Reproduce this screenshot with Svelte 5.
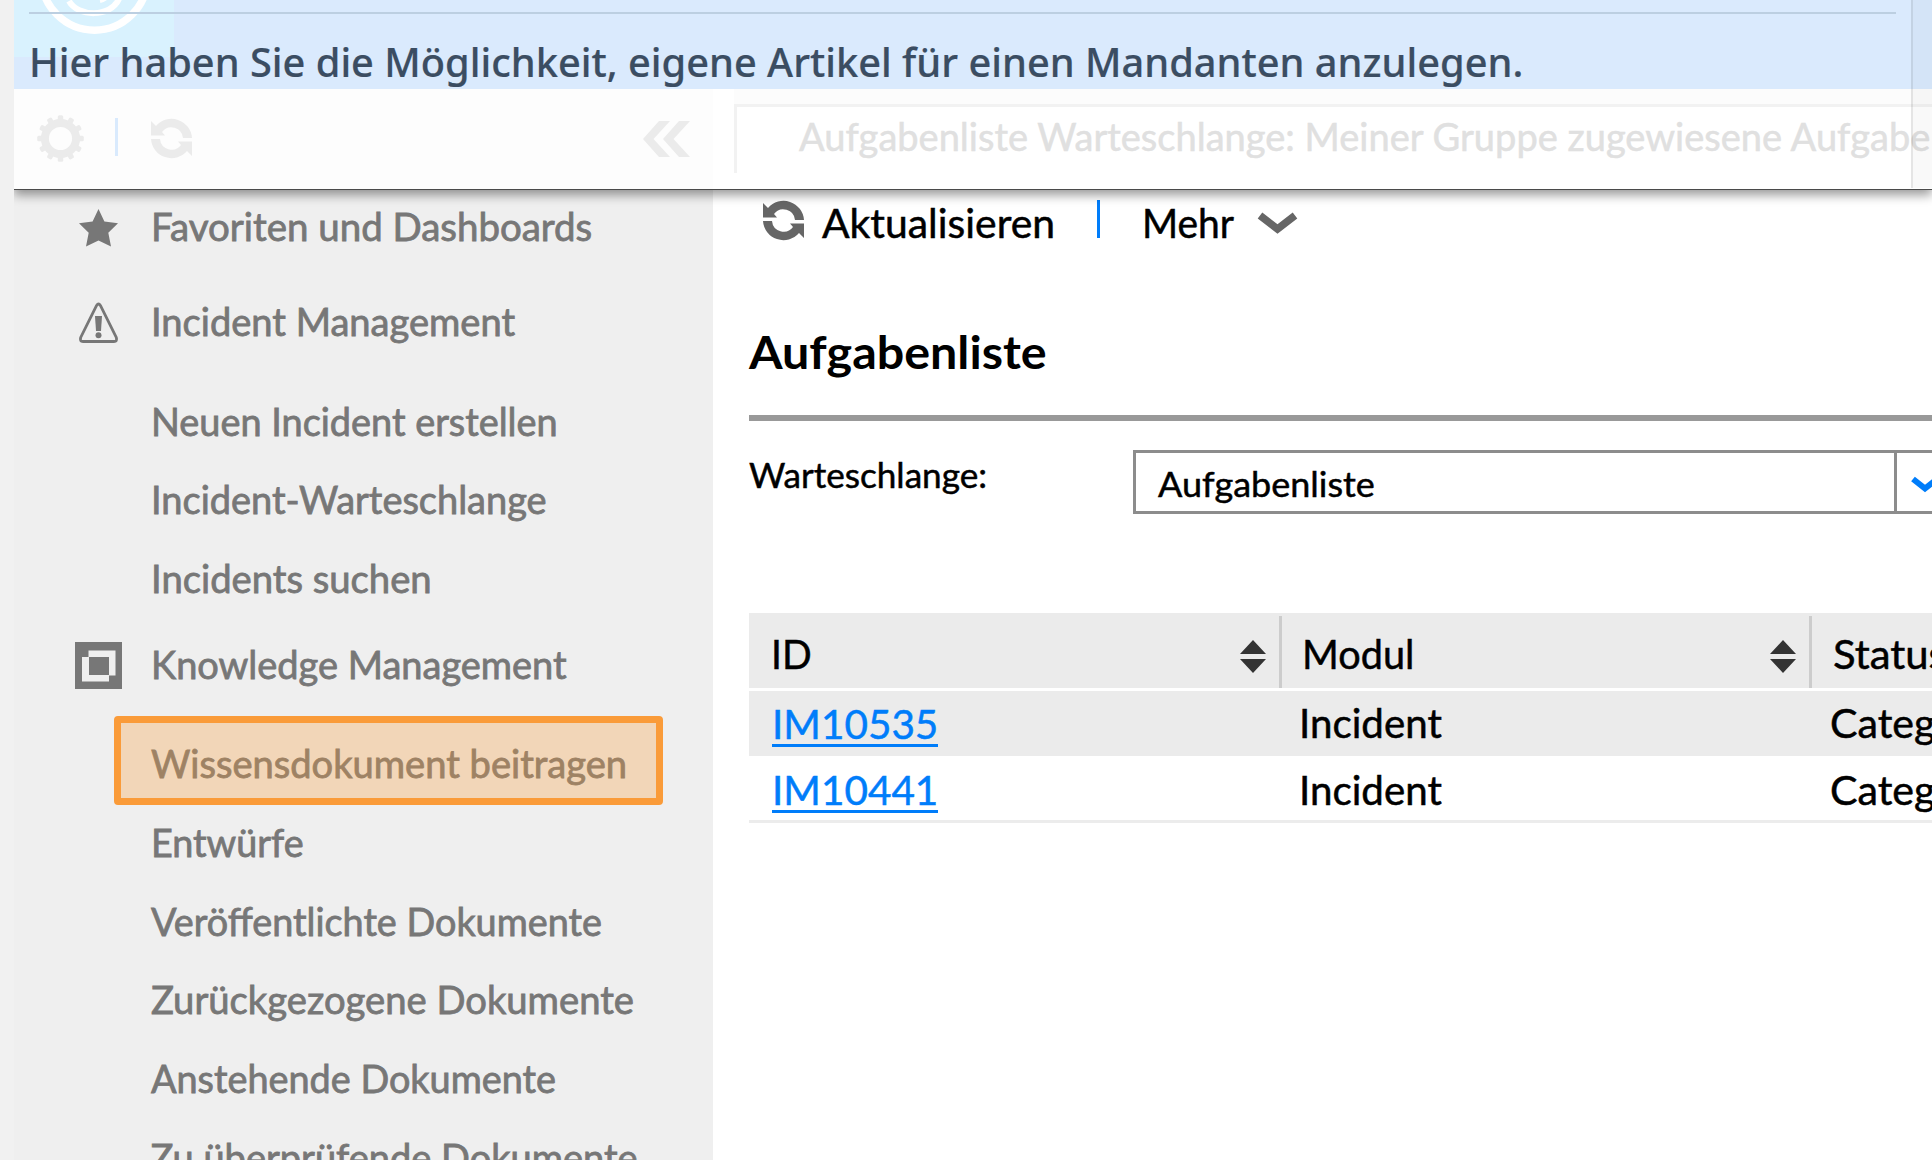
<script>
  const groups = [
    { icon: 'star', label: 'Favoriten und Dashboards', width: 441, size: 'first', items: [] },
    {
      icon: 'warning', label: 'Incident Management', width: 364.5, size: 'tall',
      items: [
        { label: 'Neuen Incident erstellen', width: 406.5 },
        { label: 'Incident-Warteschlange', width: 395.5 },
        { label: 'Incidents suchen', width: 280.5 }
      ]
    },
    {
      icon: 'knowledge', label: 'Knowledge Management', width: 415.5, size: 'medium',
      items: [
        { label: 'Wissensdokument beitragen', width: 476, active: true },
        { label: 'Entwürfe', width: 153 },
        { label: 'Veröffentlichte Dokumente', width: 450.5 },
        { label: 'Zurückgezogene Dokumente', width: 482.5 },
        { label: 'Anstehende Dokumente', width: 405 },
        { label: 'Zu überprüfende Dokumente', width: 487 }
      ]
    }
  ];

  const columns = [
    { label: 'ID', width: 41, sortable: true },
    { label: 'Modul', width: 112, sortable: true },
    { label: 'Status', width: 114, sortable: false }
  ];

  const rows = [
    { id: 'IM10535', module: 'Incident', status: 'Categ' },
    { id: 'IM10441', module: 'Incident', status: 'Categ' }
  ];

  const teeth = Array.from({ length: 12 }, (_, i) => i * 30);

  // Condenses or widens a line of text to the given width.
  function fit(node, width) {
    node.style.transform = `scaleX(${width / node.offsetWidth})`;
  }
</script>

{#snippet line(text, width)}
  <span class="line" style:width="{width}px"><span class="glyphs" use:fit={width}>{text}</span></span>
{/snippet}

{#snippet refresh()}
  <svg class="refresh" viewBox="0 0 41 41">
    <path d="M0 3 L5 8 A20.5 20.5 0 0 1 41 20 H32 A11.7 11.7 0 0 0 11 14 L14 17.5 H0Z" />
    <path d="M41 38 L36 33 A20.5 20.5 0 0 1 0 21 H9 A11.7 11.7 0 0 0 30 27 L27 23.5 H41Z" />
  </svg>
{/snippet}

<div class="app">
  <div class="edge"></div>
  <div class="window">
    <header>
      <div class="banner">
        <svg class="logo" viewBox="0 0 160 57">
          <circle cx="80.5" cy="-22.8" r="53" stroke-width="7.5" />
          <path d="M55 1 C64 17 96 18 105 -1" stroke-width="6" />
          <path d="M86 1 Q91 0 97 -6" stroke-width="4" />
        </svg>
        <div class="rule"></div>
        <p>{@render line('Hier haben Sie die Möglichkeit, eigene Artikel für einen Mandanten anzulegen.', 1494)}</p>
      </div>
      <div class="tabs">
        <div class="tools">
          <svg class="gear" viewBox="-23.5 -23.5 47 47">
            <circle r="15.6" fill="none" stroke="#ebebeb" stroke-width="8" />
            {#each teeth as angle}
              <rect x="-2.7" y="-23.3" width="5.4" height="7" rx="1.5" transform="rotate({angle})" />
            {/each}
          </svg>
          <span class="divider"></span>
          {@render refresh()}
          <svg class="collapse" viewBox="0 0 47 36">
            <path d="M16 0H27L10.500 18L27 36H16L0 18Z M36 0H47L30.500 18L47 36H36L20 18Z" />
          </svg>
        </div>
        <div class="tab">
          {@render line('Aufgabenliste Warteschlange: Meiner Gruppe zugewiesene Aufgabe', 1131)}
        </div>
      </div>
      <div class="panel-edge"></div>
    </header>

    <div class="body">
      <nav>
        {#each groups as group}
          <div class="group {group.size}">
            <span class="icon">
              {#if group.icon === 'star'}
                <svg width="39" height="38" viewBox="0 0 39 38">
                  <path d="M19.500 0L25.400 12.500L39 14.200L29.300 23.800L32 37.500L19.500 31.500L7 37.500L9.700 23.800L0 14.200L13.600 12.500Z" />
                </svg>
              {:else if group.icon === 'warning'}
                <svg width="39" height="40" viewBox="0 0 39 40">
                  <path d="M17.600 2.500Q19.500 -.5 21.400 2.500L37.300 34.500Q38.500 38.500 35 38.500H4Q.5 38.500 1.700 34.500Z" fill="none" stroke="#777" stroke-width="2.800" />
                  <path d="M16 13H23L22 28H17Z" />
                  <circle cx="19.500" cy="32.300" r="3" />
                </svg>
              {:else}
                <svg width="47" height="47" viewBox="0 0 47 47">
                  <path d="M0 0H47V47H0Z" />
                  <path d="M13.500 8.500H40.500V33.500H34V39.500H7V15H13.500Z" fill="#efefef" />
                  <path d="M14 15H34V33H14Z" />
                </svg>
              {/if}
            </span>
            {@render line(group.label, group.width)}
          </div>
          {#if group.items.length}
            <ul class={group.size}>
              {#each group.items as item}
                <li class:active={item.active}>{@render line(item.label, item.width)}</li>
              {/each}
            </ul>
          {/if}
        {/each}
      </nav>

      <main>
        <div class="toolbar">
          {@render refresh()}
          {@render line('Aktualisieren', 233)}
          <span class="divider"></span>
          {@render line('Mehr', 92.5)}
          <svg class="more" viewBox="0 0 39 21">
            <path d="M2 3.500L19.500 17L37 3.500" fill="none" stroke="#666" stroke-width="7.500" />
          </svg>
        </div>

        <h1>{@render line('Aufgabenliste', 298)}</h1>

        <div class="filter">
          <span class="name">{@render line('Warteschlange:', 238)}</span>
          <div class="select">
            <span class="value">{@render line('Aufgabenliste', 217)}</span>
            <span class="arrow">
              <svg viewBox="0 0 28 16"><path d="M2 3L14 12.500L26 3" fill="none" stroke="#007dfa" stroke-width="6" /></svg>
            </span>
          </div>
        </div>

        <div class="table">
          <div class="row head">
            {#each columns as column}
              <div class="cell">
                {@render line(column.label, column.width)}
                {#if column.sortable}
                  <svg class="sort" viewBox="0 0 26 33"><path d="M13 0L26 14H0Z M0 19H26L13 33Z" /></svg>
                {/if}
              </div>
            {/each}
          </div>
          {#each rows as row}
            <div class="row">
              <div class="cell"><a href="#{row.id}">{@render line(row.id, 166)}</a></div>
              <div class="cell">{@render line(row.module, 143)}</div>
              <div class="cell">{@render line(row.status, 106)}</div>
            </div>
          {/each}
        </div>
      </main>
    </div>
  </div>
</div>

<style>
  :global(body) { margin: 0; background: #fff; }
  .app {
    display: flex;
    width: 1932px;
    height: 1160px;
    overflow: hidden;
    font-family: Lato, "Liberation Sans", sans-serif;
    color: #000;
  }
  svg { display: block; flex: none; overflow: visible; }
  .line { display: block; flex: none; white-space: nowrap; }
  .glyphs { display: inline-block; transform-origin: left center; }
  .edge { flex: none; width: 14px; background: #f1f1f1; position: relative; z-index: 3; }
  .window { flex: none; width: 1918px; display: flex; flex-direction: column; }

  header {
    position: relative;
    z-index: 2;
    box-sizing: border-box;
    flex: none;
    height: 190px;
    border-bottom: 1px solid #4a4a4a;
    background: #fff;
    box-shadow: 0 5px 10px rgba(0, 0, 0, .4);
  }
  .banner { position: relative; height: 89px; background: #daeafd; overflow: hidden; }
  .logo {
    position: absolute;
    left: 0;
    top: 0;
    width: 160px;
    height: 57px;
    background: #d9f2fe;
    fill: none;
    stroke: #fff;
    overflow: hidden;
  }
  .rule { position: relative; width: 1867px; height: 2px; margin: 12px 0 0 15px; background: #bccfe1; }
  p {
    position: relative;
    margin: 17px 0 0 14.500px;
    font: 500 39px/62px "Noto Sans", sans-serif;
    color: #3b4d62;
    -webkit-text-stroke: .2px #3b4d62;
  }
  .tabs { display: flex; height: 100px; }
  .tools {
    box-sizing: border-box;
    width: 699px;
    padding: 0 23px 1px 23px;
    display: flex;
    align-items: center;
    background: #fdfdfd;
    fill: #ebebeb;
  }
  .gear { width: 47px; height: 47px; }
  .tools .divider { width: 3px; height: 38px; margin: 0 33px 3px 31px; background: #d9eafd; }
  .refresh { width: 41px; height: 41px; }
  .collapse { width: 47px; height: 36px; margin-left: auto; }
  .tab {
    box-sizing: border-box;
    width: 1198px;
    height: 84px;
    margin-left: 21px;
    border-top: 15px solid #fcfcfc;
    box-shadow: inset 3px 3px #f2f2f2;
    padding-left: 65px;
    font-size: 39px;
    line-height: 65px;
    color: #e0e0e0;
  }
  .tab .line { -webkit-text-stroke: .5px #e0e0e0; }
  .panel-edge {
    position: absolute;
    right: 0;
    top: 0;
    width: 19px;
    height: 188px;
    border-left: 2px solid rgba(0, 0, 0, .08);
    background: rgba(0, 0, 0, .025);
  }

  .body { display: flex; height: 970px; }
  nav {
    flex: none;
    width: 699px;
    background: #efefef;
    color: #777;
    fill: #777;
    font-size: 38px;
    -webkit-text-stroke: .8px #777;
    overflow: hidden;
  }
  .group { display: flex; align-items: center; padding-left: 61px; }
  .group.first { height: 72px; }
  .group.tall { height: 117.5px; }
  .group.medium { height: 94px; }
  .icon { width: 47px; margin-right: 28.500px; padding-top: 3px; display: flex; justify-content: center; -webkit-text-stroke: 0; }
  .tall .icon { padding-top: 5px; }
  ul { list-style: none; margin: 0; padding: 0; }
  ul.tall { margin-top: 2px; }
  ul.medium { margin-top: 13px; }
  li { position: relative; height: 78.650px; line-height: 78.650px; padding-left: 136.500px; }
  li.active::after {
    content: "";
    position: absolute;
    box-sizing: border-box;
    left: 99.500px;
    top: -8px;
    width: 549px;
    height: 88.500px;
    border: 7px solid #fa9b39;
    border-radius: 4px;
    background: rgba(249, 155, 57, .3);
    background-clip: padding-box;
  }

  main { flex: none; width: 1219px; overflow: hidden; -webkit-text-stroke: .5px #000; }
  .toolbar { display: flex; align-items: center; height: 65px; padding-left: 50px; font-size: 40px; line-height: 65px; }
  .toolbar .line { margin-top: 2px; }
  .toolbar .refresh { margin: 0 18px 4px 0; fill: #666; }
  .toolbar .divider { width: 3px; height: 38px; margin: 0 42px 7px 42px; background: #007dfa; }
  .more { width: 39px; height: 21px; margin-left: 23px; }
  h1 {
    box-sizing: border-box;
    height: 166px;
    margin: 0 0 0 36px;
    padding-top: 69px;
    border-bottom: 6px solid #999;
    font-size: 45px;
    line-height: 56px;
    font-weight: 700;
    -webkit-text-stroke: 0;
  }
  .filter { display: flex; padding: 29px 0 0 36px; font-size: 35px; line-height: 50px; }
  .name { flex: none; width: 384px; margin-top: -1px; }
  .select { display: flex; box-sizing: border-box; width: 845px; height: 64px; flex: none; border: 3px solid #8c8c8c; }
  .value { flex: none; width: 758px; padding: 5px 0 0 22px; box-sizing: border-box; }
  .arrow { border-left: 3px solid #8c8c8c; padding: 23px 0 0 14px; }
  .arrow svg { width: 28px; height: 16px; }

  .table { margin: 99px 0 0 36px; font-size: 40px; }
  .row { display: grid; grid-template-columns: 532.500px 530.500px 140px; height: 64.500px; background: #ebebeb; }
  .row .cell { display: flex; align-items: center; padding-left: 17.500px; }
  .row .cell:first-child { padding-left: 22.500px; }
  .row .cell .line { margin-top: 0; }
  .row:last-child .cell .line { margin-top: 4px; }
  .row.head { height: 75px; margin-bottom: 3px; }
  .head .cell, .head .cell:first-child { justify-content: space-between; margin-top: 3px; padding: 0 13px 0 20.500px; border-right: 3px solid #ccc; }
  .head .cell:first-child { padding-left: 22px; }
  .head .cell .sort { width: 26px; height: 33px; fill: #333; margin-top: 9px; }
  .row.head .cell .line { margin-top: 4px; }
  .row:last-child { background: #fff; border-bottom: 3px solid #ececec; }
  a { color: #007dfa; text-decoration: none; -webkit-text-stroke: .5px #007dfa; }
  .row .cell a .line { height: 47px; margin-top: -3px; border-bottom: 3px solid #007dfa; line-height: 54px; }
  .row:last-child .cell a .line { margin-top: 1px; }
</style>
